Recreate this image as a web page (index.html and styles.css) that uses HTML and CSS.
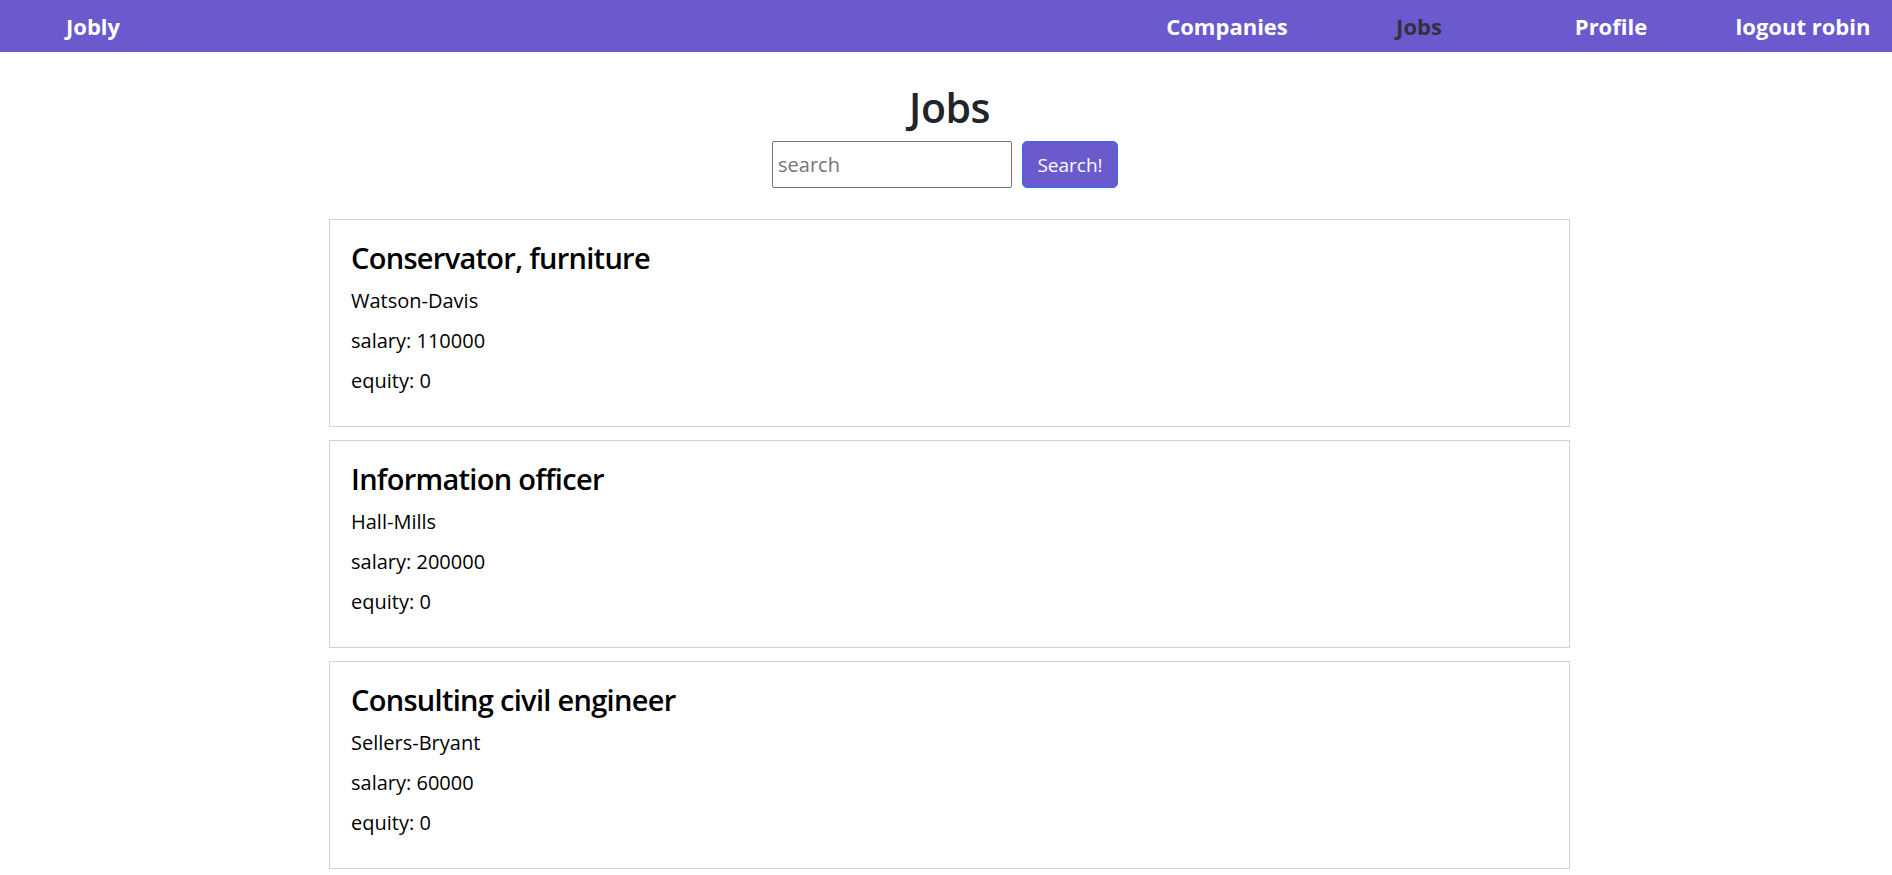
FILE: index.html
```html
<!DOCTYPE html>
<html lang="en">
<head>
<meta charset="utf-8">
<title>Jobly</title>
<link rel="stylesheet" href="styles.css">
</head>
<body>
<nav class="navbar">
  <a class="brand" href="#">Jobly</a>
  <ul class="nav-links">
    <li class="nav-item"><a class="nav-link" href="#">Companies</a></li>
    <li class="nav-item"><a class="nav-link active" href="#">Jobs</a></li>
    <li class="nav-item"><a class="nav-link" href="#">Profile</a></li>
    <li class="nav-item"><a class="nav-link" href="#">logout robin</a></li>
  </ul>
</nav>
<main class="page">
  <h1 class="page-title">Jobs</h1>
  <form class="search-form">
    <input class="search-input" type="text" placeholder="search">
    <button class="search-btn" type="button">Search!</button>
  </form>
  <div class="job-list">
    <div class="job-card">
      <h4 class="job-title">Conservator, furniture</h4>
      <p class="job-text">Watson-Davis</p>
      <p class="job-text">salary: 110000</p>
      <p class="job-text">equity: 0</p>
    </div>
    <div class="job-card">
      <h4 class="job-title">Information officer</h4>
      <p class="job-text">Hall-Mills</p>
      <p class="job-text">salary: 200000</p>
      <p class="job-text">equity: 0</p>
    </div>
    <div class="job-card">
      <h4 class="job-title">Consulting civil engineer</h4>
      <p class="job-text">Sellers-Bryant</p>
      <p class="job-text">salary: 60000</p>
      <p class="job-text">equity: 0</p>
    </div>
  </div>
</main>
</body>
</html>
```
FILE: styles.css
```css
* {
  box-sizing: border-box;
}

html, body {
  margin: 0;
  padding: 0;
  background: #ffffff;
}

body {
  font-family: "Open Sans", "Noto Sans", sans-serif;
  color: #212529;
  font-size: 20px;
  line-height: 1.5;
}

.navbar {
  display: flex;
  align-items: center;
  height: 52px;
  background: #6a5acd;
  padding-left: 66px;
  overflow: hidden;
}

.brand {
  color: #ffffff;
  font-weight: 700;
  font-size: 22px;
  text-decoration: none;
}

.nav-links {
  display: flex;
  list-style: none;
  margin: 0 -7px 0 auto;
  padding: 0;
}

.nav-item {
  width: 192px;
  display: flex;
  justify-content: center;
}

.nav-link {
  color: #ffffff;
  font-weight: 700;
  font-size: 22px;
  text-decoration: none;
  white-space: nowrap;
}

.nav-link.active {
  color: #34303c;
}

.page {
  display: flex;
  flex-direction: column;
  align-items: center;
  padding-left: 7px;
}

.page-title {
  margin: 31px 0 10px;
  font-size: 41px;
  line-height: 48px;
  font-weight: 600;
  letter-spacing: -0.5px;
  color: #212529;
}

.search-form {
  display: flex;
  gap: 10px;
  padding-right: 9px;
  margin: 0 0 31px;
}

.search-input {
  width: 240px;
  height: 47px;
  border: 1px solid #767676;
  border-radius: 2px;
  padding: 0 5px;
  font-family: inherit;
  font-size: 20px;
  color: #212529;
  outline: none;
}

.search-input::placeholder {
  color: #757575;
}

.search-btn {
  height: 47px;
  width: 96px;
  padding: 0;
  background: #6a5acd;
  color: #ffffff;
  border: 1px solid #2f6cf6;
  border-radius: 5px;
  font-family: inherit;
  font-size: 19px;
}

.job-list {
  width: 1241px;
  display: flex;
  flex-direction: column;
  gap: 13px;
}

.job-card {
  border: 1px solid #d3d3d3;
  padding: 20px 21px;
  height: 208px;
  color: #000000;
}

.job-title {
  margin: 0 0 10px;
  font-size: 29px;
  line-height: 36px;
  font-weight: 600;
  letter-spacing: -0.7px;
}

.job-text {
  margin: 0 0 10px;
  font-size: 20px;
  line-height: 30px;
}
```
